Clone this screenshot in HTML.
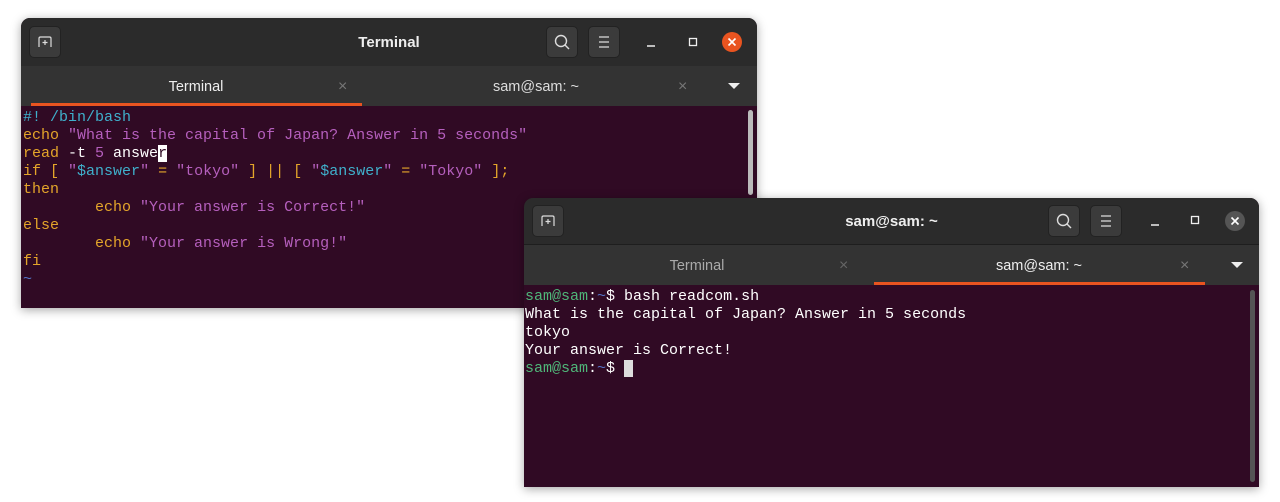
<!DOCTYPE html>
<html><head><meta charset="utf-8"><style>
body{margin:0;width:1280px;height:502px;background:#fff;position:relative;overflow:hidden;font-family:"Liberation Sans",sans-serif}
.win{position:absolute;background:#300a24;border-radius:9px 9px 0 0;overflow:hidden;box-shadow:0 2px 10px rgba(0,0,0,.35)}
.hdr{position:absolute;left:0;right:0;top:0;height:48px;background:#2b2b2b;border-bottom:1px solid #1e1e1e}
.tabs{position:absolute;left:0;right:0;top:48px;height:40px;background:#333}
.btn{position:absolute;top:8px;width:32px;height:32px;border-radius:5px;background:#3b3b3b;border:1px solid #222;box-sizing:border-box}
.title{position:absolute;top:16px;left:0;right:0;text-align:center;color:#eee;font-weight:bold;font-size:15px}
.tab{position:absolute;top:1px;height:40px;line-height:40px;text-align:center;font-size:14.5px}
.x{position:absolute;top:1px;line-height:40px;color:#777;font-size:16px}
.ul{position:absolute;bottom:0;height:3px;background:#e95420}
.term{position:absolute;left:2px;font-family:"Liberation Mono",monospace;font-size:15px;line-height:18px;white-space:pre;color:#fff}
.o{color:#e4a52a}.p{color:#b55fbd}.c{color:#3fb0cc}.g{color:#4fb679}.b{color:#5574c8}
.sb{position:absolute;width:5px;border-radius:3px;background:#bbb}
svg{position:absolute}
</style></head><body>

<div class="win" style="left:21px;top:18px;width:736px;height:290px">
 <div class="hdr">
  <div class="btn" style="left:8px"><svg width="30" height="30" viewBox="0 0 30 30"><path d="M9 20V11.5q0-1.5 1.5-1.5h9q1.5 0 1.5 1.5V20M12.5 15.5h5M15 13v5" stroke="#ddd" stroke-width="1.2" fill="none"/></svg></div>
  <div class="title">Terminal</div>
  <div class="btn" style="left:525px"><svg width="30" height="30"><circle cx="14" cy="14" r="5.5" stroke="#ddd" stroke-width="1.4" fill="none"/><path d="M18 18l4 4" stroke="#ddd" stroke-width="1.4"/></svg></div>
  <div class="btn" style="left:567px"><svg width="30" height="30"><path d="M10 10h10M10 15h10M10 20h10" stroke="#ddd" stroke-width="1.2"/></svg></div>
  <svg style="left:620px;top:14px" width="20" height="20"><path d="M6 14h8" stroke="#eee" stroke-width="1.5"/></svg>
  <svg style="left:662px;top:14px" width="20" height="20"><rect x="6.5" y="6.5" width="7" height="7" stroke="#eee" stroke-width="1.3" fill="none"/></svg>
  <svg style="left:700px;top:13px" width="22" height="22"><circle cx="11" cy="11" r="10" fill="#e95420"/><path d="M7.5 7.5l7 7M14.5 7.5l-7 7" stroke="#fff" stroke-width="1.6"/></svg>
 </div>
 <div class="tabs">
  <div class="tab" style="left:10px;width:330px;color:#eee">Terminal</div><div class="x" style="left:317px">×</div>
  <div class="ul" style="left:10px;width:331px"></div>
  <div class="tab" style="left:350px;width:330px;color:#ddd">sam@sam: ~</div><div class="x" style="left:657px">×</div>
  <svg style="left:705px;top:14px" width="16" height="12"><path d="M2 3h12l-6 6z" fill="#eee"/></svg>
 </div>
 <div class="sb" style="left:727px;top:92px;height:85px"></div>
<div class="term" style="top:91px"><span class="c">#! /bin/bash</span>
<span class="o">echo</span> <span class="p">"What is the capital of Japan? Answer in 5 seconds"</span>
<span class="o">read</span> -t <span class="p">5</span> answe<span style="background:#fff;color:#300a24">r</span>
<span class="o">if [</span> <span class="p">"</span><span class="c">$answer</span><span class="p">"</span> <span class="o">=</span> <span class="p">"tokyo"</span> <span class="o">] || [</span> <span class="p">"</span><span class="c">$answer</span><span class="p">"</span> <span class="o">=</span> <span class="p">"Tokyo"</span> <span class="o">];</span>
<span class="o">then</span>
        <span class="o">echo</span> <span class="p">"Your answer is Correct!"</span>
<span class="o">else</span>
        <span class="o">echo</span> <span class="p">"Your answer is Wrong!"</span>
<span class="o">fi</span>
<span class="b">~</span></div>
</div>

<div class="win" style="left:524px;top:198px;width:735px;height:289px">
 <div class="hdr" style="height:46px">
  <div class="btn" style="left:8px;top:7px"><svg width="30" height="30" viewBox="0 0 30 30"><path d="M9 20V11.5q0-1.5 1.5-1.5h9q1.5 0 1.5 1.5V20M12.5 15.5h5M15 13v5" stroke="#ddd" stroke-width="1.2" fill="none"/></svg></div>
  <div class="title" style="top:15px">sam@sam: ~</div>
  <div class="btn" style="left:524px;top:7px"><svg width="30" height="30"><circle cx="14" cy="14" r="5.5" stroke="#ddd" stroke-width="1.4" fill="none"/><path d="M18 18l4 4" stroke="#ddd" stroke-width="1.4"/></svg></div>
  <div class="btn" style="left:566px;top:7px"><svg width="30" height="30"><path d="M10 10h10M10 15h10M10 20h10" stroke="#ddd" stroke-width="1.2"/></svg></div>
  <svg style="left:621px;top:13px" width="20" height="20"><path d="M6 14h8" stroke="#eee" stroke-width="1.5"/></svg>
  <svg style="left:661px;top:12px" width="20" height="20"><rect x="6.5" y="6.5" width="7" height="7" stroke="#eee" stroke-width="1.3" fill="none"/></svg>
  <svg style="left:700px;top:12px" width="22" height="22"><circle cx="11" cy="11" r="10" fill="#555"/><path d="M7.5 7.5l7 7M14.5 7.5l-7 7" stroke="#fff" stroke-width="1.6"/></svg>
 </div>
 <div class="tabs" style="top:47px">
  <div class="tab" style="left:8px;width:330px;color:#aaa">Terminal</div><div class="x" style="left:315px;color:#666">×</div>
  <div class="tab" style="left:350px;width:330px;color:#eee">sam@sam: ~</div><div class="x" style="left:656px">×</div>
  <div class="ul" style="left:350px;width:331px"></div>
  <svg style="left:705px;top:14px" width="16" height="12"><path d="M2 3h12l-6 6z" fill="#eee"/></svg>
 </div>
 <div class="sb" style="left:726px;top:92px;height:192px;background:#555"></div>
<div class="term" style="top:90px;left:1px"><span class="g">sam@sam</span>:<span class="b">~</span>$ bash readcom.sh
What is the capital of Japan? Answer in 5 seconds
tokyo
Your answer is Correct!
<span class="g">sam@sam</span>:<span class="b">~</span>$ <span style="background:#ddd"> </span></div>
</div>
</body></html>
